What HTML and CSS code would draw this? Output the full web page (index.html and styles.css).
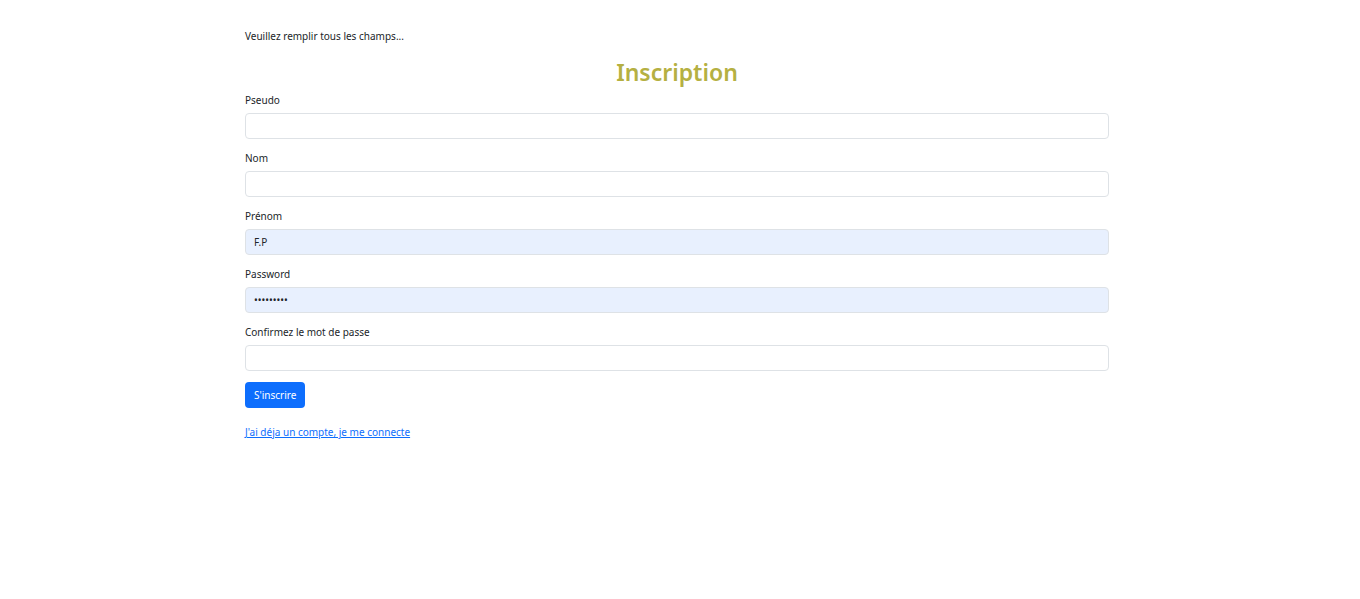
FILE: index.html
```html
<!DOCTYPE html>
<html lang="fr">
<head>
<meta charset="utf-8">
<title>Inscription</title>
<link rel="stylesheet" href="styles.css">
</head>
<body>
<div class="container">
  <p class="notice">Veuillez remplir tous les champs...</p>
  <h1 class="title">Inscription</h1>
  <form class="form">
    <div class="field">
      <label class="label">Pseudo</label>
      <input class="input" type="text">
    </div>
    <div class="field">
      <label class="label">Nom</label>
      <input class="input" type="text">
    </div>
    <div class="field">
      <label class="label">Prénom</label>
      <input class="input filled" type="text" value="F.P">
    </div>
    <div class="field">
      <label class="label">Password</label>
      <input class="input filled" type="password" value="123456789">
    </div>
    <div class="field">
      <label class="label">Confirmez le mot de passe</label>
      <input class="input" type="password">
    </div>
    <button class="btn" type="button">S'inscrire</button>
  </form>
  <a class="link" href="#">J'ai déja un compte, je me connecte</a>
</div>
</body>
</html>
```
FILE: styles.css
```css
* { box-sizing: border-box; }
body {
  margin: 0;
  font-family: "Noto Sans", "Open Sans", sans-serif;
  font-size: 10px;
  color: #212529;
  background: #fff;
}
.container {
  width: 864px;
  margin-left: 245px;
  padding-top: 29px;
}
.notice {
  margin: 0;
  line-height: 15px;
}
.title {
  margin: 12px 0 4px;
  text-align: center;
  font-size: 23px;
  font-weight: 600;
  line-height: 32px;
  color: #b5b042;
}
.field {
  margin-bottom: 11px;
}
.label {
  display: block;
  line-height: 16px;
  margin-bottom: 5px;
}
.input {
  display: block;
  width: 100%;
  height: 26px;
  border: 1px solid #dee2e6;
  border-radius: 4px;
  padding: 0 8px;
  font-family: inherit;
  font-size: 10px;
  color: #212529;
  background: #fff;
  outline: none;
}
.input.filled {
  background: #e8f0fe;
}
.btn {
  display: block;
  height: 26px;
  padding: 0 9px;
  border: none;
  border-radius: 4px;
  background: #0d6efd;
  color: #fff;
  font-family: inherit;
  font-size: 10px;
}
.link {
  display: inline-block;
  margin-top: 17px;
  color: #0d6efd;
  text-decoration: underline;
  line-height: 15px;
}
```
